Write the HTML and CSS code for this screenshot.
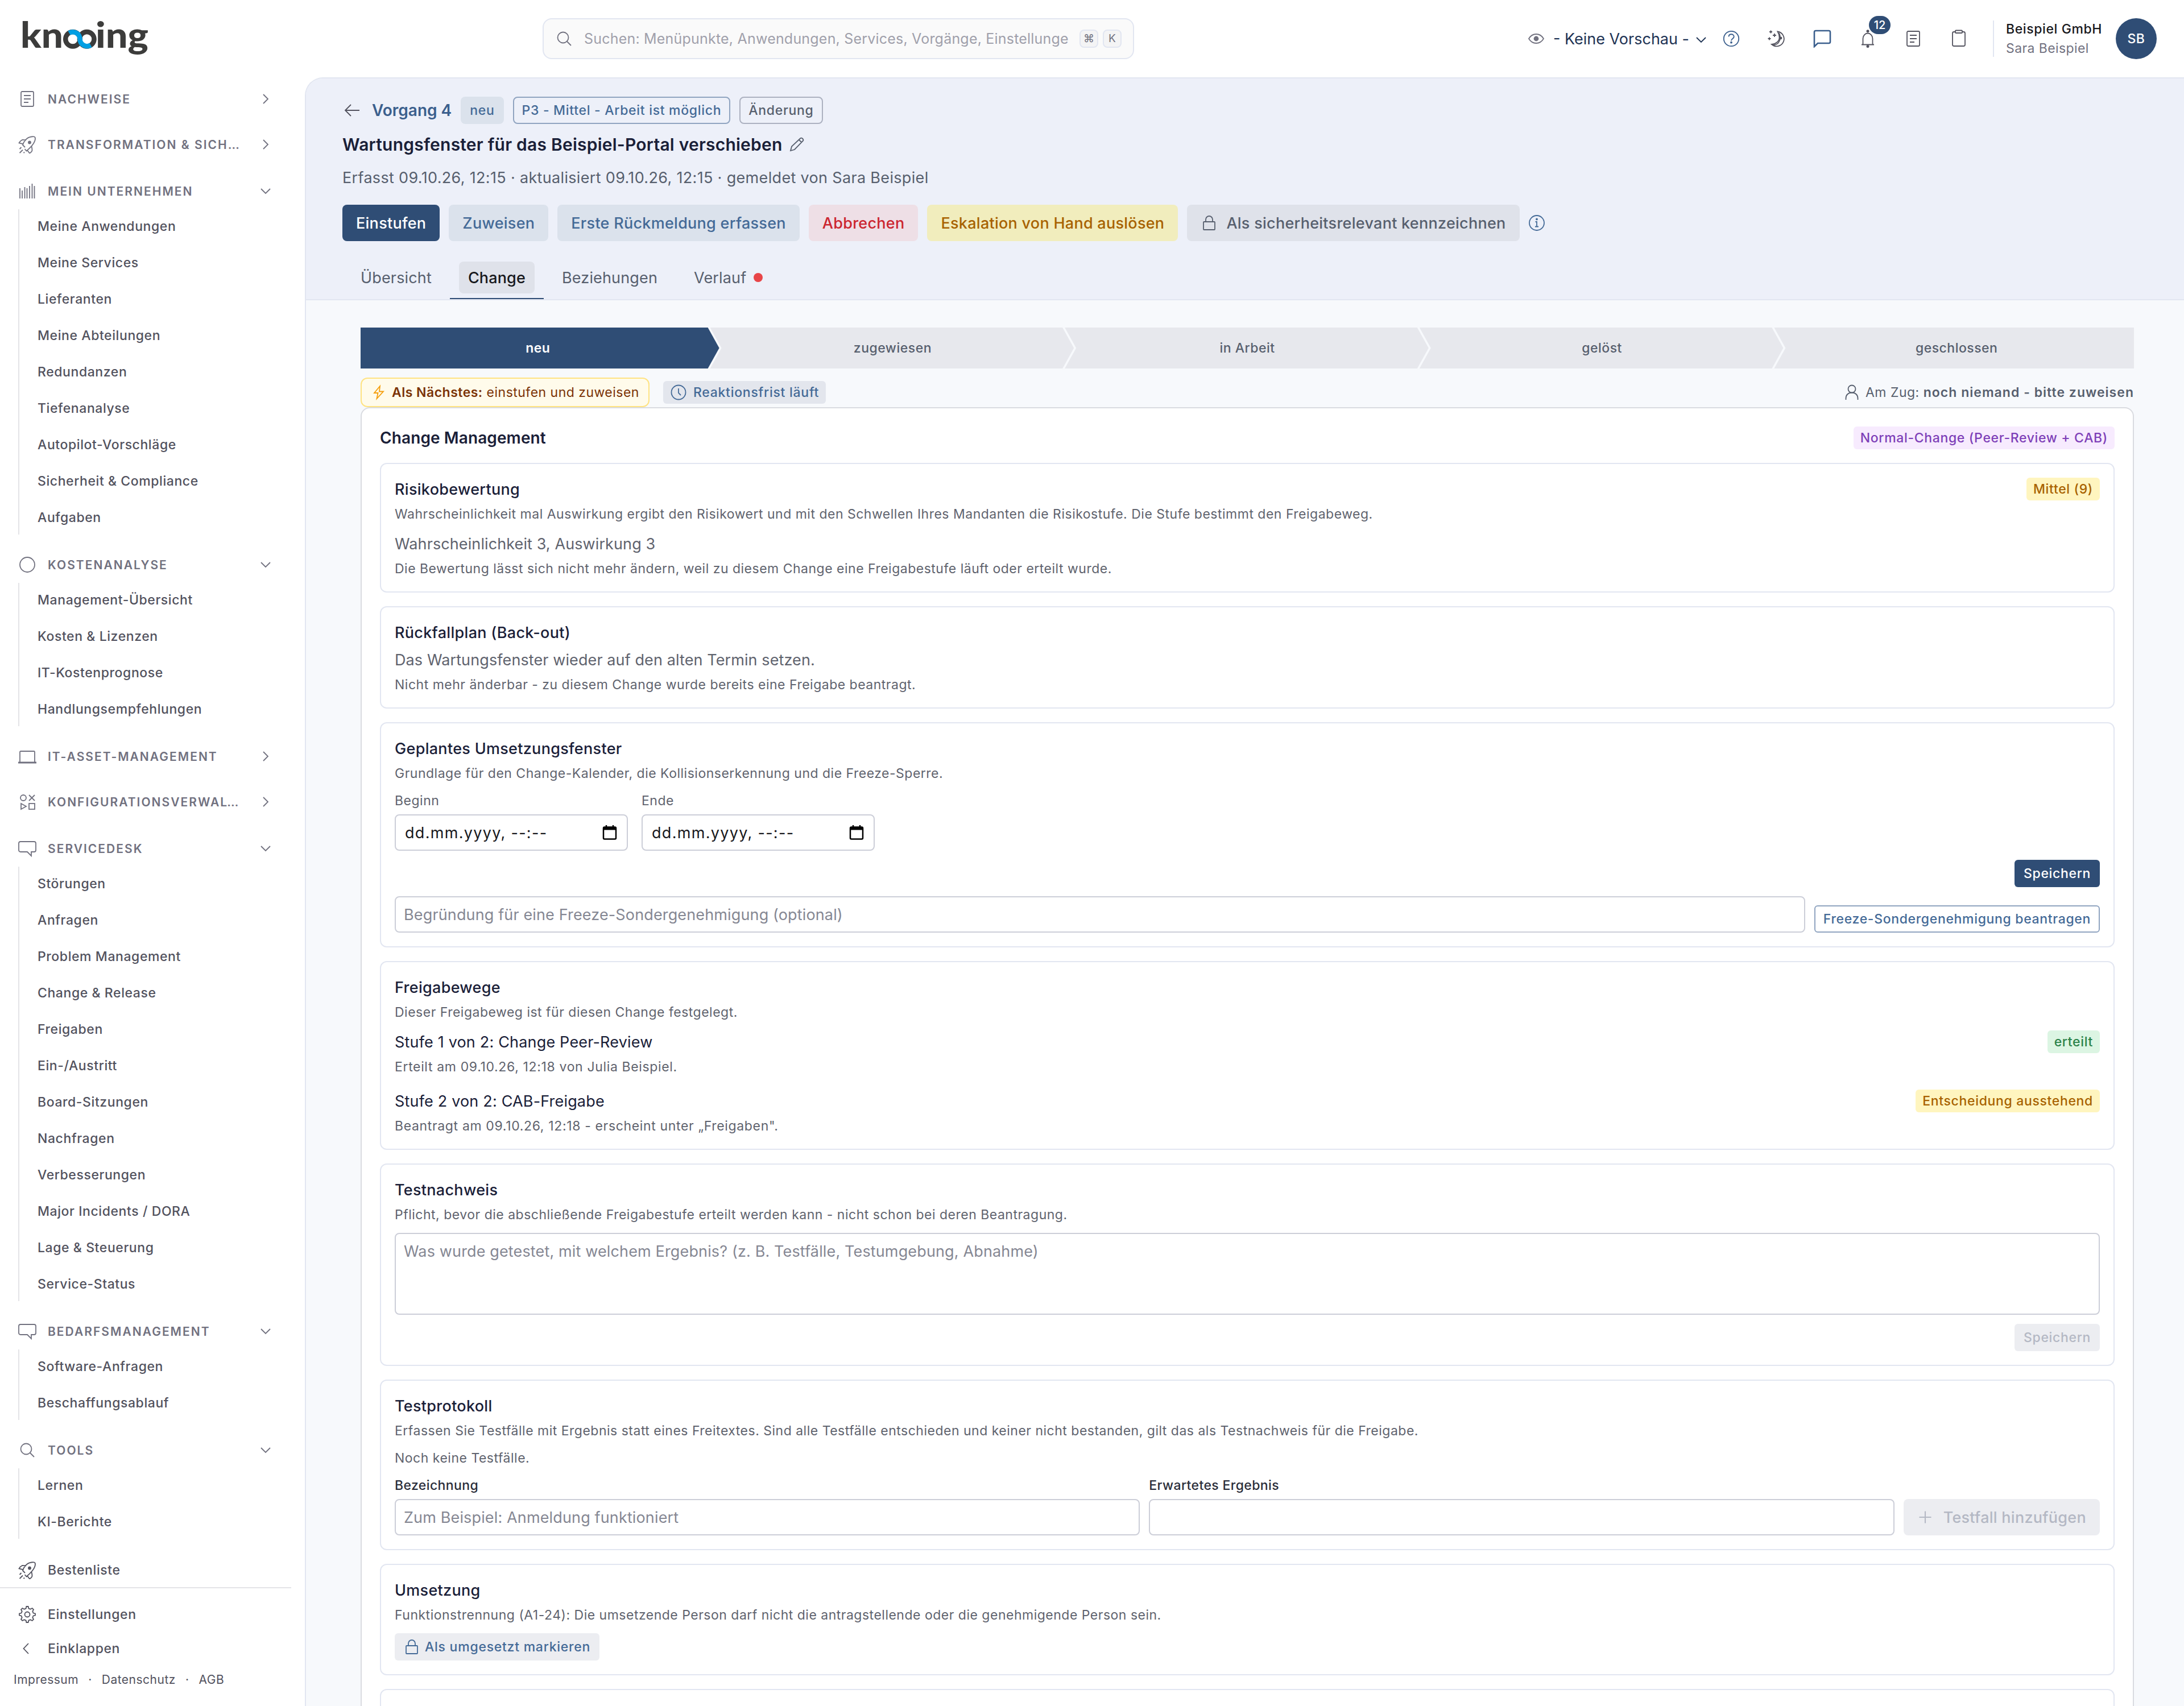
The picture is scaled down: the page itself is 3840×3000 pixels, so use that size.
FILE: index.html
```
<!DOCTYPE html>
<html lang="de">
<head>
    <meta charset="UTF-8">
    <meta name="viewport" content="width=device-width, initial-scale=1.0">
    <title>Vorgang 4 - knooing</title>
    <link rel="stylesheet" href="styles.css">
</head>
<body>
    <!-- Icon sprite -->
    <svg class="sprite" aria-hidden="true">
        <symbol id="i-list" viewBox="0 0 32 32"><rect x="5" y="3" width="22" height="26" rx="2"/><path d="M10 10h12M10 16h12M10 22h8"/></symbol>
        <symbol id="i-rocket" viewBox="0 0 32 32"><path d="M12 21l-4-4c1.500-6 7-13.500 15-14.500 3-.4 6-.2 6.500.8.6 1.500.5 4-.3 6.500C27 16.500 21 22 14.500 27.500l-3-3.500M8.500 16l-.5-1-6.500-1.500c1-2 3.500-4.500 5.500-5.500 1.500-.3 4.500 0 7 .5M15 27l2 .5 3 4c2.500-1.500 4.500-3 4.500-5.500 0-2-.3-4-1-6.500M5.500 21l-3 3M2.500 31l5.500-5.500M9.500 31l1.500-1.500"/><circle cx="20" cy="12.500" r="2" class="fill"/></symbol>
        <symbol id="i-bars" viewBox="0 0 32 32"><path d="M3 29V11M7 29V15M11.500 29V9M15.500 29V11M20 29V7M24.500 29V3M28.500 29V7"/></symbol>
        <symbol id="i-circle" viewBox="0 0 32 32"><circle cx="16" cy="16" r="13"/></symbol>
        <symbol id="i-laptop" viewBox="0 0 32 32"><path d="M3 26V8.500A1.500 1.500 0 0 1 4.500 7h23A1.500 1.500 0 0 1 29 8.500V26"/><path d="M0 27h32" class="thick"/></symbol>
        <symbol id="i-shapes" viewBox="0 0 32 32"><circle cx="9" cy="9" r="5"/><path d="M19 4l10 10M29 4L19 14M5 19v10l9-5z"/><rect x="19" y="19" width="10" height="10"/></symbol>
        <symbol id="i-speech" viewBox="0 0 32 32"><path d="M4 4h24a3 3 0 0 1 3 3v12a3 3 0 0 1-3 3h-5v7l-7-7H4a3 3 0 0 1-3-3V7a3 3 0 0 1 3-3z"/></symbol>
        <symbol id="i-search" viewBox="0 0 32 32"><circle cx="14" cy="14" r="9.500"/><path d="M20.500 20.500L28 28"/></symbol>
        <symbol id="i-gear" viewBox="0 0 32 32"><circle cx="16" cy="16" r="4.500"/><path d="M13.600 5.500L14.400 2h3.200l.8 3.500 3 1.200L24.600 5 27 7.400l-1.700 3.200 1.200 3L30 14.400v3.200l-3.500.8-1.200 3 1.700 3.200L24.600 27l-3.200-1.700-3 1.200-.8 3.500h-3.200l-.8-3.500-3-1.200L7.400 27 5 24.600l1.700-3.200-1.200-3L2 17.600v-3.200l3.500-.8 1.200-3L5 7.400 7.400 5l3.200 1.700z"/></symbol>
        <symbol id="i-right" viewBox="0 0 20 20"><path d="M6 2l8 8-8 8"/></symbol>
        <symbol id="i-left" viewBox="0 0 20 20"><path d="M14 1l-8.500 9 8.500 9"/></symbol>
        <symbol id="i-down" viewBox="0 0 20 20"><path d="M2 6l8 8 8-8"/></symbol>
        <symbol id="i-arrow" viewBox="0 0 32 32"><path d="M29 16H4M14 6L4 16l10 10"/></symbol>
        <symbol id="i-pencil" viewBox="0 0 28 28"><path d="M3 25l2-7.500L20.500 3c2-1.500 6 2 4.500 4.500L10 23zM18 6l4.500 4.500"/></symbol>
        <symbol id="i-lock" viewBox="0 0 28 28"><rect x="4" y="12" width="20" height="14" rx="1"/><path d="M8 12V8a6 6 0 0 1 12 0v4"/></symbol>
        <symbol id="i-info" viewBox="0 0 28 28"><circle cx="14" cy="14" r="13"/><path d="M11.500 12H14v8M11 20.500h6"/><circle cx="14" cy="7.500" r="1" class="fill"/></symbol>
        <symbol id="i-bolt" viewBox="0 0 28 28"><path d="M16 3L6 15h6.500L10.500 25 22 12.500h-7z"/></symbol>
        <symbol id="i-clock" viewBox="0 0 28 28"><circle cx="14" cy="14" r="12.500"/><path d="M14 7v8l4 4"/></symbol>
        <symbol id="i-user" viewBox="0 0 28 28"><circle cx="14" cy="8" r="6.500"/><path d="M3.500 27v-2.500C3.500 18.500 7.500 14.500 14 14.500s10.500 4 10.500 10V27"/></symbol>
        <symbol id="i-eye" viewBox="0 0 32 32"><path d="M3 16c3-5 8-8 13-8s10 3 13 8c-3 5-8 8-13 8S6 21 3 16z"/><circle cx="16" cy="16" r="3.500" class="fill"/></symbol>
        <symbol id="i-help" viewBox="0 0 32 32"><circle cx="16" cy="16" r="13.200"/><path d="M11.500 12.500c.3-5.800 9.300-5.500 9.200 0 0 3.500-4.700 3.500-4.700 7"/><circle cx="16" cy="22.700" r="1" class="fill"/></symbol>
        <symbol id="i-moon" viewBox="0 0 32 32"><path d="M17.500 3.500A13 13 0 1 1 7 26c6 0 14-5 13.500-12.500C20.500 9 19 6 17.500 3.500z"/><path d="M20 6c2.500 5 3 12-1 17-2 2.500-6 4-9 4.500"/><circle cx="23" cy="15" r="1.500" class="fill"/><path d="M5.500 1.500v5M3 4h5M12 7v6M9 10h6M3 13.500v5M.5 16h5"/></symbol>
        <symbol id="i-chat" viewBox="0 0 32 32"><path d="M4.500 2h23A2.500 2.500 0 0 1 30 4.500v17a2.500 2.500 0 0 1-2.500 2.500H8l-6 6V4.500A2.500 2.500 0 0 1 4.500 2z"/></symbol>
        <symbol id="i-bell" viewBox="0 0 32 32"><path d="M7.500 26V16a8.500 9.500 0 0 1 17 0v10M5 26.500h22"/><circle cx="16" cy="2.800" r="1.600" class="fill"/><circle cx="16" cy="29.500" r="1.600" class="fill"/></symbol>
        <symbol id="i-clipboard" viewBox="0 0 32 32"><rect x="5" y="4" width="22" height="25" rx="2.500"/><rect x="10" y="1.500" width="12" height="4.500" rx="1" class="paper"/></symbol>
        <symbol id="i-plus" viewBox="0 0 24 24"><path d="M12 3v18M3 12h18"/></symbol>
        <symbol id="i-calendar" viewBox="0 0 28 28"><rect x="3" y="4.500" width="22" height="21" rx="2"/><path d="M3 7h22" class="bar"/><path d="M8 1v4M20 1v4"/></symbol>
    </svg>

    <header class="topbar">
        <svg class="logo" viewBox="0 0 228 72" role="img" aria-label="knooing">
            <g class="logo-text">
                <text x="-4" y="52" textLength="75" lengthAdjust="spacingAndGlyphs">kn</text>
                <text x="128" y="52" textLength="93" lengthAdjust="spacingAndGlyphs">ing</text>
            </g>
            <circle cx="88" cy="36.700" r="12.800" class="ring"/>
            <circle cx="112.700" cy="36.700" r="12.800" class="ring"/>
            <path d="M81.500 25.900A12.800 12.800 0 0 1 100.500 36.200A12.800 12.800 0 0 0 119.500 47.500" class="ring loop"/>
        </svg>
        <div class="search">
            <svg class="icon"><use href="#i-search"/></svg>
            <span class="search-text">Suchen: Menüpunkte, Anwendungen, Services, Vorgänge, Einstellungen</span>
            <kbd>⌘</kbd>
            <kbd>K</kbd>
        </div>
        <div class="preview">
            <svg class="icon"><use href="#i-eye"/></svg>
            <span>- Keine Vorschau -</span>
            <svg class="chev"><use href="#i-down"/></svg>
        </div>
        <div class="actions">
            <a class="blue"><svg class="icon"><use href="#i-help"/></svg></a>
            <a><svg class="icon"><use href="#i-moon"/></svg></a>
            <a class="blue strong"><svg class="icon"><use href="#i-chat"/></svg></a>
            <a><svg class="icon"><use href="#i-bell"/></svg><span class="count">12</span></a>
            <a><svg class="icon"><use href="#i-list"/></svg></a>
            <a><svg class="icon"><use href="#i-clipboard"/></svg></a>
        </div>
        <div class="account">
            <div class="who">
                <strong>Beispiel GmbH</strong>
                <span>Sara Beispiel</span>
            </div>
            <div class="avatar">SB</div>
        </div>
    </header>

    <div class="layout">
        <aside class="sidebar">
            <nav>
                <div class="nav-row"><svg class="icon"><use href="#i-list"/></svg><span>Nachweise</span><svg class="chev"><use href="#i-right"/></svg></div>
                <div class="nav-row"><svg class="icon"><use href="#i-rocket"/></svg><span>Transformation &amp; Sicherheit</span><svg class="chev"><use href="#i-right"/></svg></div>
                <div class="nav-group">
                    <div class="nav-row"><svg class="icon"><use href="#i-bars"/></svg><span>Mein Unternehmen</span><svg class="chev"><use href="#i-down"/></svg></div>
                    <ul>
                        <li>Meine Anwendungen</li>
                        <li>Meine Services</li>
                        <li>Lieferanten</li>
                        <li>Meine Abteilungen</li>
                        <li>Redundanzen</li>
                        <li>Tiefenanalyse</li>
                        <li>Autopilot-Vorschläge</li>
                        <li>Sicherheit &amp; Compliance</li>
                        <li>Aufgaben</li>
                    </ul>
                </div>
                <div class="nav-group">
                    <div class="nav-row"><svg class="icon"><use href="#i-circle"/></svg><span>Kostenanalyse</span><svg class="chev"><use href="#i-down"/></svg></div>
                    <ul>
                        <li>Management-Übersicht</li>
                        <li>Kosten &amp; Lizenzen</li>
                        <li>IT-Kostenprognose</li>
                        <li>Handlungsempfehlungen</li>
                    </ul>
                </div>
                <div class="nav-row"><svg class="icon"><use href="#i-laptop"/></svg><span>IT-Asset-Management</span><svg class="chev"><use href="#i-right"/></svg></div>
                <div class="nav-row"><svg class="icon"><use href="#i-shapes"/></svg><span>Konfigurationsverwaltung</span><svg class="chev"><use href="#i-right"/></svg></div>
                <div class="nav-group">
                    <div class="nav-row"><svg class="icon"><use href="#i-speech"/></svg><span>Servicedesk</span><svg class="chev"><use href="#i-down"/></svg></div>
                    <ul>
                        <li>Störungen</li>
                        <li>Anfragen</li>
                        <li>Problem Management</li>
                        <li>Change &amp; Release</li>
                        <li>Freigaben</li>
                        <li>Ein-/Austritt</li>
                        <li>Board-Sitzungen</li>
                        <li>Nachfragen</li>
                        <li>Verbesserungen</li>
                        <li>Major Incidents / DORA</li>
                        <li>Lage &amp; Steuerung</li>
                        <li>Service-Status</li>
                    </ul>
                </div>
                <div class="nav-group">
                    <div class="nav-row"><svg class="icon"><use href="#i-speech"/></svg><span>Bedarfsmanagement</span><svg class="chev"><use href="#i-down"/></svg></div>
                    <ul>
                        <li>Software-Anfragen</li>
                        <li>Beschaffungsablauf</li>
                    </ul>
                </div>
                <div class="nav-group">
                    <div class="nav-row"><svg class="icon"><use href="#i-search"/></svg><span>Tools</span><svg class="chev"><use href="#i-down"/></svg></div>
                    <ul>
                        <li>Lernen</li>
                        <li>KI-Berichte</li>
                    </ul>
                </div>
                <div class="nav-link"><svg class="icon"><use href="#i-rocket"/></svg><span>Bestenliste</span></div>
            </nav>
            <div class="sidebar-foot">
                <div class="nav-link"><svg class="icon"><use href="#i-gear"/></svg><span>Einstellungen</span></div>
                <div class="nav-link collapse"><svg class="chev"><use href="#i-left"/></svg><span>Einklappen</span></div>
                <div class="legal"><span>Impressum</span><span>·</span><span>Datenschutz</span><span>·</span><span>AGB</span></div>
            </div>
        </aside>

        <main>
            <section class="page-head">
                <div class="crumb">
                    <svg class="icon"><use href="#i-arrow"/></svg>
                    <strong>Vorgang 4</strong>
                    <span class="tag soft">neu</span>
                    <span class="tag outline-blue">P3 - Mittel - Arbeit ist möglich</span>
                    <span class="tag outline">Änderung</span>
                </div>
                <h1>Wartungsfenster für das Beispiel-Portal verschieben <svg class="icon-sm"><use href="#i-pencil"/></svg></h1>
                <p class="meta">Erfasst 09.10.26, 12:15 · aktualisiert 09.10.26, 12:15 · gemeldet von Sara Beispiel</p>
                <div class="buttons">
                    <button class="btn primary">Einstufen</button>
                    <button class="btn soft">Zuweisen</button>
                    <button class="btn soft">Erste Rückmeldung erfassen</button>
                    <button class="btn danger">Abbrechen</button>
                    <button class="btn warning">Eskalation von Hand auslösen</button>
                    <button class="btn grey"><svg class="icon-sm"><use href="#i-lock"/></svg>Als sicherheitsrelevant kennzeichnen</button>
                    <svg class="icon-sm info"><use href="#i-info"/></svg>
                </div>
                <div class="tabs">
                    <div class="tab"><span>Übersicht</span></div>
                    <div class="tab active"><span>Change</span></div>
                    <div class="tab"><span>Beziehungen</span></div>
                    <div class="tab"><span>Verlauf<i class="dot"></i></span></div>
                </div>
            </section>

            <section class="content">
                <div class="steps">
                    <div class="step current">neu</div>
                    <div class="step">zugewiesen</div>
                    <div class="step">in Arbeit</div>
                    <div class="step">gelöst</div>
                    <div class="step">geschlossen</div>
                </div>
                <div class="status">
                    <div class="next"><svg class="icon-sm"><use href="#i-bolt"/></svg><span><b>Als Nächstes:</b> einstufen und zuweisen</span></div>
                    <div class="deadline"><svg class="icon-sm"><use href="#i-clock"/></svg>Reaktionsfrist läuft</div>
                    <div class="turn"><svg class="icon-sm"><use href="#i-user"/></svg><span>Am Zug: <b>noch niemand - bitte zuweisen</b></span></div>
                </div>

                <div class="panel">
                    <div class="row">
                        <h2>Change Management</h2>
                        <span class="badge purple">Normal-Change (Peer-Review + CAB)</span>
                    </div>

                    <div class="card">
                        <div class="row">
                            <h3>Risikobewertung</h3>
                            <span class="badge yellow">Mittel (9)</span>
                        </div>
                        <p class="note">Wahrscheinlichkeit mal Auswirkung ergibt den Risikowert und mit den Schwellen Ihres Mandanten die Risikostufe. Die Stufe bestimmt den Freigabeweg.</p>
                        <p class="text gap">Wahrscheinlichkeit 3, Auswirkung 3</p>
                        <p class="note">Die Bewertung lässt sich nicht mehr ändern, weil zu diesem Change eine Freigabestufe läuft oder erteilt wurde.</p>
                    </div>

                    <div class="card">
                        <h3>Rückfallplan (Back-out)</h3>
                        <p class="text">Das Wartungsfenster wieder auf den alten Termin setzen.</p>
                        <p class="note">Nicht mehr änderbar - zu diesem Change wurde bereits eine Freigabe beantragt.</p>
                    </div>

                    <div class="card">
                        <h3>Geplantes Umsetzungsfenster</h3>
                        <p class="note">Grundlage für den Change-Kalender, die Kollisionserkennung und die Freeze-Sperre.</p>
                        <div class="dates">
                            <div class="field">
                                <label>Beginn</label>
                                <div class="input date"><span>dd.mm.yyyy, --:--</span><svg class="icon-sm"><use href="#i-calendar"/></svg></div>
                            </div>
                            <div class="field">
                                <label>Ende</label>
                                <div class="input date"><span>dd.mm.yyyy, --:--</span><svg class="icon-sm"><use href="#i-calendar"/></svg></div>
                            </div>
                        </div>
                        <div class="end"><button class="btn-sm primary">Speichern</button></div>
                        <div class="freeze">
                            <div class="input">Begründung für eine Freeze-Sondergenehmigung (optional)</div>
                            <button class="btn-sm outline-btn">Freeze-Sondergenehmigung beantragen</button>
                        </div>
                    </div>

                    <div class="card">
                        <h3>Freigabewege</h3>
                        <p class="note">Dieser Freigabeweg ist für diesen Change festgelegt.</p>
                        <div class="row stage">
                            <span class="stage-name">Stufe 1 von 2: Change Peer-Review</span>
                            <span class="badge green">erteilt</span>
                        </div>
                        <p class="note dated">Erteilt am 09.10.26, 12:18 von Julia Beispiel.</p>
                        <div class="row stage second">
                            <span class="stage-name">Stufe 2 von 2: CAB-Freigabe</span>
                            <span class="badge yellow">Entscheidung ausstehend</span>
                        </div>
                        <p class="note dated">Beantragt am 09.10.26, 12:18 - erscheint unter „Freigaben".</p>
                    </div>

                    <div class="card">
                        <h3>Testnachweis</h3>
                        <p class="note">Pflicht, bevor die abschließende Freigabestufe erteilt werden kann - nicht schon bei deren Beantragung.</p>
                        <div class="input area">Was wurde getestet, mit welchem Ergebnis? (z. B. Testfälle, Testumgebung, Abnahme)</div>
                        <div class="end"><button class="btn-sm disabled">Speichern</button></div>
                    </div>

                    <div class="card">
                        <h3>Testprotokoll</h3>
                        <p class="note">Erfassen Sie Testfälle mit Ergebnis statt eines Freitextes. Sind alle Testfälle entschieden und keiner nicht bestanden, gilt das als Testnachweis für die Freigabe.</p>
                        <p class="note gap">Noch keine Testfälle.</p>
                        <div class="case">
                            <div class="field dark">
                                <label>Bezeichnung</label>
                                <div class="input">Zum Beispiel: Anmeldung funktioniert</div>
                            </div>
                            <div class="field dark">
                                <label>Erwartetes Ergebnis</label>
                                <div class="input"></div>
                            </div>
                            <button class="btn disabled"><svg class="plus"><use href="#i-plus"/></svg>Testfall hinzufügen</button>
                        </div>
                    </div>

                    <div class="card">
                        <h3>Umsetzung</h3>
                        <p class="note">Funktionstrennung (A1-24): Die umsetzende Person darf nicht die antragstellende oder die genehmigende Person sein.</p>
                        <button class="btn-sm mark"><svg class="icon-sm"><use href="#i-lock"/></svg>Als umgesetzt markieren</button>
                    </div>

                    <div class="card"></div>
                </div>
            </section>
        </main>
    </div>
</body>
</html>
```
FILE: styles.css
```
/* Global Styles */
* {
    box-sizing: border-box;
}

body {
    margin: 0;
    height: 3000px;
    overflow: hidden;
    background-color: #ffffff;
    color: #52525e;
    font-family: Inter, "Liberation Sans", sans-serif;
    font-size: 23px;
    letter-spacing: 0.5px;
}

h1, h2, h3, p, ul {
    margin: 0;
    padding: 0;
    list-style: none;
}

button {
    font-family: inherit;
    border: none;
    white-space: nowrap;
}

/* Icons */
.sprite {
    display: none;
}

svg {
    fill: none;
    stroke: currentColor;
    stroke-width: 1.8;
    flex-shrink: 0;
}

symbol {
    overflow: visible;
}

.fill {
    fill: currentColor;
}

.thick {
    stroke-width: 3;
}

.bar {
    stroke-width: 5;
}

.paper {
    fill: #ffffff;
}

.icon {
    width: 32px;
    height: 32px;
}

.icon-sm {
    width: 28px;
    height: 28px;
}

.chev {
    width: 20px;
    height: 20px;
}

/* Top bar */
.topbar {
    height: 136px;
    display: flex;
    align-items: center;
    padding: 0 48px 0 40px;
}

.logo {
    width: 228px;
    height: 72px;
    overflow: visible;
}

.logo-text {
    font-family: Lato, sans-serif;
    font-weight: 900;
    font-size: 63px;
    letter-spacing: 0;
    fill: #3c3c3b;
    stroke: none;
}

.ring {
    stroke: #3c3c3b;
    stroke-width: 8.5;
}

.loop {
    stroke: #009fe3;
}

.search {
    width: 1040px;
    height: 72px;
    margin-left: 686px;
    padding: 0 20px;
    display: flex;
    align-items: center;
    gap: 8px;
    border: 2px solid #e2e6f1;
    border-radius: 16px;
    background-color: #fafafa;
    color: #71717f;
}

.search-text {
    flex: 1;
    margin-left: 11px;
    margin-right: 11px;
    overflow: hidden;
    white-space: nowrap;
    font-size: 25px;
    letter-spacing: 0.2px;
    color: #a0a0ab;
}

kbd {
    width: 33px;
    height: 32px;
    line-height: 28px;
    text-align: center;
    border: 2px solid #e2e6f1;
    border-radius: 8px;
    background-color: #f4f4f5;
    font-family: Inter, "DejaVu Sans", sans-serif;
    font-size: 19px;
    letter-spacing: 0;
}

.preview {
    margin-left: auto;
    display: flex;
    align-items: center;
    font-size: 27px;
    letter-spacing: 0;
    color: #1e3354;
}

.preview .icon {
    color: #71717f;
    margin-right: 14px;
}

.preview .chev {
    margin: 4px 3px 0 11px;
}

.actions {
    display: flex;
}

.actions a {
    position: relative;
    width: 80px;
    display: flex;
    justify-content: center;
    color: #52525e;
}

.actions .blue {
    color: #3b5f8d;
}

.actions .strong svg {
    stroke-width: 2.6;
}

.count {
    position: absolute;
    left: 42px;
    top: -24px;
    width: 38px;
    height: 32px;
    line-height: 33px;
    border-radius: 16px;
    background-color: #2f4d75;
    color: #ffffff;
    font-size: 20px;
    font-weight: 500;
    letter-spacing: 0;
    text-align: center;
}

.account {
    height: 64px;
    margin-left: 20px;
    padding-left: 21px;
    display: flex;
    align-items: center;
    border-left: 2px solid #e2e6f1;
}

.who {
    width: 193px;
    display: flex;
    flex-direction: column;
    line-height: 34px;
    letter-spacing: 0.4px;
    white-space: nowrap;
    color: #71717f;
}

.who strong {
    font-weight: 500;
    letter-spacing: 0.6px;
    color: #17181c;
}

.avatar {
    width: 72px;
    height: 72px;
    line-height: 72px;
    border-radius: 50%;
    background-color: #2f4d75;
    color: #ffffff;
    font-weight: 500;
    text-align: center;
}

/* Layout */
.layout {
    display: flex;
    height: 2864px;
}

/* Sidebar */
.sidebar {
    width: 536px;
    flex-shrink: 0;
    display: flex;
    flex-direction: column;
}

nav {
    flex: 1;
    padding: 10px 56px 0 32px;
    display: flex;
    flex-direction: column;
    gap: 24px;
}

.nav-row {
    height: 56px;
    display: flex;
    align-items: center;
    color: #71717f;
    font-size: 21px;
    font-weight: 600;
    letter-spacing: 2.02px;
    text-transform: uppercase;
}

.nav-row span {
    width: 342px;
    margin-left: 20px;
    overflow: hidden;
    text-overflow: ellipsis;
    white-space: nowrap;
}

.nav-row .chev {
    margin-left: auto;
    margin-right: 3px;
}

.nav-row + .nav-group {
    margin-top: 2px;
}

.nav-group ul {
    margin-top: 4px;
    margin-bottom: 1px;
    padding-left: 32px;
    border-left: 2px solid #e4e4e7;
    display: flex;
    flex-direction: column;
    gap: 4px;
}

.nav-group li {
    height: 60px;
    line-height: 60px;
    font-weight: 500;
    letter-spacing: 0.58px;
}

.nav-link {
    display: flex;
    align-items: center;
    gap: 20px;
    height: 60px;
    font-weight: 500;
    letter-spacing: 0.6px;
}

.sidebar-foot {
    width: 512px;
    height: 211px;
    padding: 16px 0 0 32px;
    border-top: 2px solid #e4e4e7;
}

.collapse .chev {
    margin: 0 6px 0 2px;
    width: 24px;
}

.legal {
    display: flex;
    gap: 17px;
    margin: 11px 0 0 -8px;
    line-height: 28px;
    font-size: 21px;
    letter-spacing: 0.5px;
}

/* Page header */
main {
    flex: 1;
    border-top: 2px solid #e2e6f1;
    border-left: 2px solid #e2e6f1;
    border-top-left-radius: 32px;
    background-color: #f7f9fc;
    overflow: hidden;
}

.page-head {
    padding: 32px 64px 0;
    border-bottom: 2px solid #e2e6f1;
    background-color: #edf0f9;
}

.crumb {
    display: flex;
    align-items: center;
    gap: 16px;
    height: 48px;
}

.crumb .icon {
    margin: 0 3px 0 1px;
}

.crumb strong {
    font-size: 28px;
    font-weight: 600;
    letter-spacing: 0;
    color: #3b5f8d;
}

.tag {
    height: 48px;
    padding: 0 14px;
    line-height: 44px;
    border: 2px solid transparent;
    border-radius: 8px;
    font-weight: 500;
    letter-spacing: 0.7px;
}

.tag.soft {
    background-color: #dbe2ec;
    color: #446a97;
}

.tag.outline-blue {
    border-color: #90a4c0;
    color: #446a97;
}

.tag.outline {
    border-color: #acb1c0;
    color: #575f6e;
}

h1 {
    display: flex;
    align-items: center;
    gap: 11px;
    margin-top: 17px;
    line-height: 38px;
    font-size: 30px;
    font-weight: 600;
    letter-spacing: 0.22px;
    color: #1a2038;
}

h1 svg {
    color: #575f6e;
}

.meta {
    margin-top: 20px;
    line-height: 40px;
    font-size: 27px;
    letter-spacing: 0.33px;
    color: #575f6e;
}

.buttons {
    display: flex;
    align-items: center;
    gap: 16px;
    margin-top: 27px;
}

.btn {
    height: 64px;
    padding: 0 24px;
    display: flex;
    align-items: center;
    gap: 16px;
    border-radius: 8px;
    font-size: 27px;
    font-weight: 500;
    letter-spacing: 0.27px;
}

.primary {
    background-color: #2f4d75;
    color: #ffffff;
}

.btn.soft {
    background-color: #dbe2ec;
    color: #446a97;
}

.danger {
    background-color: #eedfe6;
    color: #cc2630;
}

.warning {
    background-color: #f1edbd;
    color: #a86200;
}

.grey {
    background-color: #dfe2ea;
    color: #575f6e;
}

.grey svg {
    margin-left: 1px;
}

.info {
    color: #446a97;
}

.tabs {
    display: flex;
    margin-top: 20px;
}

.tab {
    padding: 16px 16px 8px;
    border-bottom: 2px solid transparent;
}

.tab span {
    display: flex;
    align-items: center;
    height: 56px;
    padding: 0 16px;
    border-radius: 8px;
    font-size: 27px;
    letter-spacing: 0.15px;
    color: #575f6e;
}

.tab.active {
    border-bottom-color: #2f4d75;
}

.tab.active span {
    background-color: #dfe2ea;
    color: #17181c;
    font-weight: 500;
}

.dot {
    width: 16px;
    height: 16px;
    margin-left: 13px;
    border-radius: 50%;
    background-color: #e84548;
}

/* Content */
.content {
    padding: 48px 88px 0 96px;
}

/* Process steps */
.steps {
    display: grid;
    grid-template-columns: repeat(5, 1fr);
    isolation: isolate;
}

.step {
    position: relative;
    height: 72px;
    line-height: 72px;
    text-align: center;
    font-weight: 500;
    color: #575f6e;
}

.step::before {
    content: "";
    position: absolute;
    z-index: -1;
    inset: 0 -7px 0 -9px;
    background-color: #e7e8ed;
    clip-path: polygon(0 0, calc(100% - 20px) 0, 100% 50%, calc(100% - 20px) 100%, 0 100%, 20px 50%);
}

.step.current {
    color: #ffffff;
    font-weight: 600;
}

.step.current::before {
    left: 0;
    background-color: #2f4d75;
    clip-path: polygon(0 0, calc(100% - 20px) 0, 100% 50%, calc(100% - 20px) 100%, 0 100%);
}

.step:last-child::before {
    right: 0;
    clip-path: polygon(0 0, 100% 0, 100% 100%, 0 100%, 20px 50%);
}

.status {
    display: flex;
    align-items: center;
    margin-top: 16px;
    height: 52px;
}

.next {
    height: 52px;
    padding: 0 16px;
    display: flex;
    align-items: center;
    gap: 9px;
    border: 2px solid #ffe382;
    border-radius: 12px;
    background-color: #fffbeb;
    color: #7b3306;
    letter-spacing: 0.48px;
}

.next .icon-sm {
    color: #f59e0b;
}

b {
    font-weight: 600;
}

.deadline {
    height: 40px;
    margin-left: 24px;
    padding: 0 12px 0 13px;
    display: flex;
    align-items: center;
    gap: 12px;
    border-radius: 6px;
    background-color: #e3e6ed;
    color: #446a97;
    font-weight: 500;
    letter-spacing: 0.74px;
}

.turn {
    margin-left: auto;
    display: flex;
    align-items: center;
    gap: 10px;
    color: #575f6e;
}

.turn b {
    letter-spacing: 1.02px;
}

.panel {
    height: 2400px;
    padding: 32px;
    display: flex;
    flex-direction: column;
    gap: 24px;
    border: 2px solid #d9dbe0;
    border-radius: 16px;
    background-color: #ffffff;
}

.row {
    display: flex;
    align-items: center;
    justify-content: space-between;
    height: 40px;
    flex-shrink: 0;
}

h2 {
    font-size: 28px;
    font-weight: 600;
    letter-spacing: 0.1px;
    color: #1a2038;
}

.badge {
    height: 40px;
    padding: 0 12px;
    line-height: 40px;
    border-radius: 6px;
    font-weight: 500;
    letter-spacing: 0.66px;
}

.purple {
    background-color: #f7ebfe;
    color: #7e3fb8;
}

.yellow {
    background-color: #fff5bf;
    color: #a86200;
}

.green {
    background-color: #dcf5e3;
    color: #2b8249;
}

/* Cards */
.card {
    padding: 24px;
    flex-shrink: 0;
    border: 2px solid #e2e6f1;
    border-radius: 12px;
}

h3, .stage-name {
    padding-top: 1px;
    line-height: 39px;
    font-size: 27px;
    font-weight: 500;
    letter-spacing: 0.3px;
    color: #1a2038;
}

.stage-name {
    font-weight: 400;
    letter-spacing: 0.18px;
}

.note {
    margin-top: 8px;
    line-height: 32px;
    color: #5f636e;
}

.dated {
    letter-spacing: 0.65px;
}

.text {
    margin-top: 8px;
    padding-top: 1px;
    line-height: 39px;
    font-size: 27px;
    letter-spacing: 0.1px;
    color: #5f636e;
}

.card .gap {
    margin-top: 16px;
}

.stage {
    margin-top: 16px;
}

.stage.second {
    margin-top: 24px;
}

/* Forms */
.dates {
    display: flex;
    gap: 24px;
    margin-top: 16px;
}

.dates .field {
    width: 410px;
}

label {
    display: block;
    line-height: 32px;
    margin-bottom: 8px;
    color: #5f636e;
}

.dark label {
    font-weight: 500;
    letter-spacing: 0.38px;
    color: #2a2d3a;
}

.input {
    height: 64px;
    padding: 0 14px;
    line-height: 61px;
    border: 2px solid #ccced8;
    border-radius: 8px;
    background-color: #ffffff;
    font-size: 27px;
    letter-spacing: 0.14px;
    color: #858793;
}

.date {
    display: flex;
    align-items: center;
    justify-content: space-between;
    padding: 0 16px;
    letter-spacing: 1.3px;
    color: #17181c;
}

.date svg {
    stroke-width: 2.5;
    color: #000000;
}

.area {
    height: 144px;
    margin-top: 16px;
}

.end {
    display: flex;
    justify-content: flex-end;
    margin-top: 16px;
}

.btn-sm {
    height: 48px;
    padding: 0 16px;
    border-radius: 6px;
    font-size: 23px;
    font-weight: 500;
    letter-spacing: 0.66px;
}

.freeze {
    display: flex;
    align-items: flex-end;
    gap: 16px;
    margin-top: 16px;
}

.freeze .input {
    flex: 1;
}

.outline-btn {
    padding: 0 14px;
    border: 2px solid #90a4c0;
    background-color: #ffffff;
    color: #446a97;
}

.disabled {
    background-color: #ecedf1;
    color: #b4b8c4;
}

.case {
    display: flex;
    align-items: flex-end;
    gap: 16px;
    margin-top: 16px;
}

.case .field {
    flex: 1;
}

.case .btn {
    gap: 18px;
}

.plus {
    width: 28px;
    height: 28px;
}

.mark {
    display: flex;
    align-items: center;
    gap: 9px;
    margin-top: 16px;
    letter-spacing: 0.75px;
    background-color: #ecedf1;
    color: #446a97;
}
```
